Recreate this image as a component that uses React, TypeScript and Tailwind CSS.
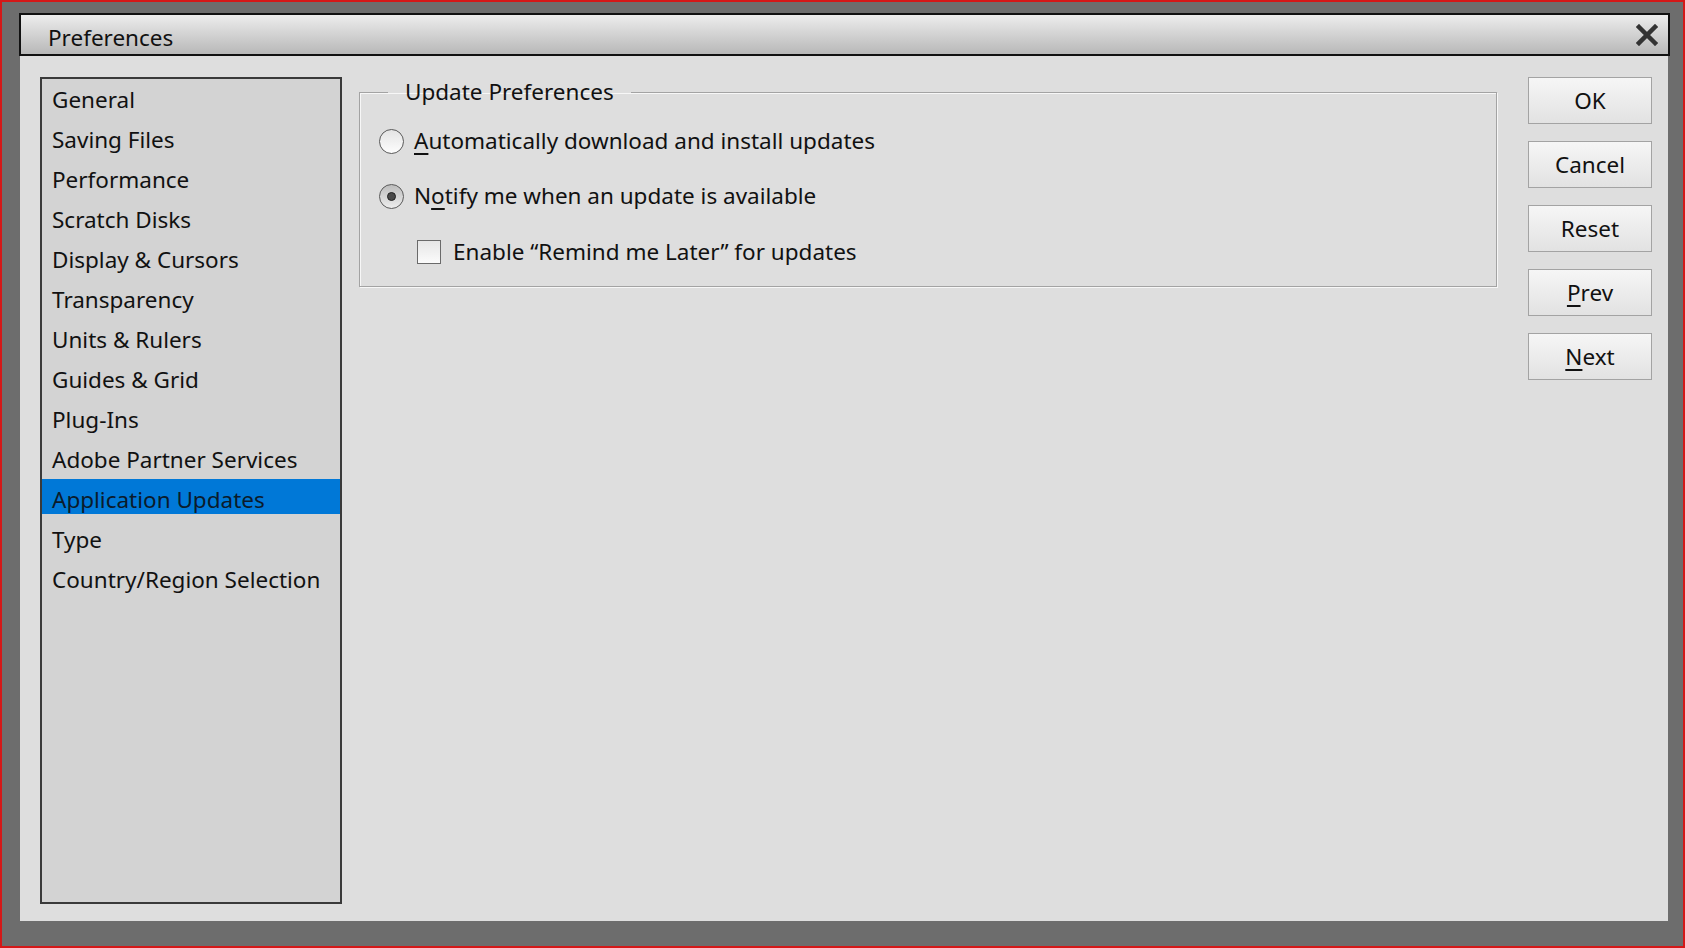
import React from 'react';

const FONT = { fontFamily: '"Noto Sans", "Open Sans", sans-serif' };

const sections = [
  'General',
  'Saving Files',
  'Performance',
  'Scratch Disks',
  'Display & Cursors',
  'Transparency',
  'Units & Rulers',
  'Guides & Grid',
  'Plug-Ins',
  'Adobe Partner Services',
  'Application Updates',
  'Type',
  'Country/Region Selection',
];

const Radio = ({ checked }: { checked?: boolean }) => (
  <span
    className={`flex h-[25px] w-[25px] shrink-0 items-center justify-center rounded-full border border-[#5a5a5a] ${
      checked
        ? 'bg-gradient-to-b from-[#bdbdbd] to-[#ededed]'
        : 'bg-gradient-to-b from-[#e4e4e4] to-[#fdfdfd]'
    }`}
  >
    {checked && <span className="h-[9px] w-[9px] rounded-full border border-[#222] bg-[#4a4a4a]" />}
  </span>
);

const DialogButton = ({ children }: { children: React.ReactNode }) => (
  <button className="flex h-[47px] w-[124px] items-center justify-center border border-[#a3a3a3] bg-gradient-to-b from-[#f6f6f6] to-[#e2e2e2] text-[22.5px] text-[#111]">
    {children}
  </button>
);

export default function App() {
  return (
    <div
      className="h-[948px] w-[1685px] overflow-hidden border-2 border-[#d41818] bg-[#6d6d6d] pl-[17px] pt-[11px]"
      style={FONT}
    >
      <div className="w-[1651px]">
        {/* Title bar */}
        <div className="flex h-[43px] items-center justify-between border-2 border-[#111] bg-gradient-to-b from-[#ededed] to-[#b8b8b8] pl-[27px] pr-[10px]">
          <span className="pt-[6px] text-[22.5px] text-[#111]">Preferences</span>
          <svg width="22" height="22" viewBox="0 0 22 22">
            <path d="M3 3 L19 19 M19 3 L3 19" stroke="#333" strokeWidth="4.5" strokeLinecap="square" />
          </svg>
        </div>

        {/* Body */}
        <div className="ml-px flex h-[865px] w-[1648px] bg-[#dedede] pl-[20px] pr-[16px] pt-[21px]">
          {/* Section list */}
          <div className="flex h-[827px] w-[302px] shrink-0 flex-col border-2 border-[#3a3a3a] bg-[#d3d3d3] pt-[1px]">
            {sections.map((s) => (
              <div key={s} className="h-[40px]">
                {s === 'Application Updates' ? (
                  <div className="-mt-px flex h-[35px] items-center bg-[#0078d7] pl-[10px] pt-[6px] text-[22.5px] text-[#0b1b2b]">
                    {s}
                  </div>
                ) : (
                  <div className="flex h-[40px] items-center pl-[10px] text-[22.5px] text-[#111]">{s}</div>
                )}
              </div>
            ))}
          </div>

          {/* Settings panel */}
          <div className="ml-[17px] flex-1">
            <fieldset className="h-[210px] w-[1138px] border border-[#a3a3a3] pl-[19px] shadow-[inset_1px_1px_0_#f7f7f7,1px_1px_0_#f7f7f7]">
              <legend className="ml-[9px] px-[17px] text-[22.5px] leading-[30px] text-[#111]">
                Update Preferences
              </legend>
              <div className="flex flex-col">
                <label className="mt-[17px] flex h-[34px] items-center gap-[10px] text-[22.5px] text-[#111]">
                  <Radio />
                  <span>
                    <span className="underline underline-offset-[4px]">A</span>utomatically download and install updates
                  </span>
                </label>
                <label className="mt-[21px] flex h-[34px] items-center gap-[10px] text-[22.5px] text-[#111]">
                  <Radio checked />
                  <span>
                    N<span className="underline underline-offset-[4px]">o</span>tify me when an update is available
                  </span>
                </label>
                <label className="ml-[38px] mt-[22px] flex h-[34px] items-center gap-[12px] text-[22.5px] text-[#111]">
                  <span className="h-[24px] w-[24px] shrink-0 border border-[#6a6a6a] bg-gradient-to-b from-[#e6e6e6] to-[#fbfbfb]" />
                  <span>Enable “Remind me Later” for updates</span>
                </label>
              </div>
            </fieldset>
          </div>

          {/* Buttons */}
          <div className="ml-[30px] flex flex-col gap-[17px]">
            <DialogButton>OK</DialogButton>
            <DialogButton>Cancel</DialogButton>
            <DialogButton>Reset</DialogButton>
            <DialogButton>
              <span>
                <span className="underline underline-offset-[4px]">P</span>rev
              </span>
            </DialogButton>
            <DialogButton>
              <span>
                <span className="underline underline-offset-[4px]">N</span>ext
              </span>
            </DialogButton>
          </div>
        </div>
      </div>
    </div>
  );
}
